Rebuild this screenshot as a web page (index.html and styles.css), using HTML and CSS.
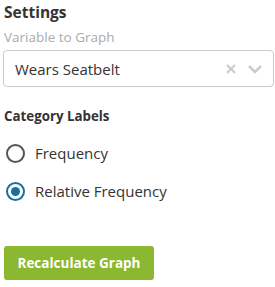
FILE: index.html
```html
<!DOCTYPE html>
<html lang="en">
<head>
    <meta charset="UTF-8">
    <title>Settings</title>
    <link rel="stylesheet" href="styles.css">
</head>
<body>
    <div class="settings">
        <h3>Settings</h3>
        <div class="field-label">Variable to Graph</div>
        <div class="select-box">
            <span class="select-value">Wears Seatbelt</span>
            <span class="select-icons">
                <svg class="clear-icon" width="12" height="12" viewBox="0 0 12 12">
                    <path d="M2 2 L10 10 M10 2 L2 10" stroke="#ccc" stroke-width="2.2" fill="none"/>
                </svg>
                <svg class="chevron-icon" width="16" height="12" viewBox="0 0 16 12">
                    <path d="M2 3 L8 9 L14 3" stroke="#ccc" stroke-width="2.6" fill="none"/>
                </svg>
            </span>
        </div>

        <h4>Category Labels</h4>
        <label class="radio">
            <span class="radio-circle"></span>
            Frequency
        </label>
        <label class="radio checked">
            <span class="radio-circle"></span>
            Relative Frequency
        </label>

        <button class="btn-recalc">Recalculate Graph</button>
    </div>
</body>
</html>
```
FILE: styles.css
```css
body {
    margin: 0;
    padding: 0 4px;
    font-family: "Open Sans", sans-serif;
    color: #333;
    background: white;
}
.settings {
    display: flex;
    flex-direction: column;
    align-items: flex-start;
}
h3 {
    margin: 2px 0 0 0;
    font-size: 15.5px;
    font-weight: 700;
    line-height: 20px;
}
.field-label {
    margin-top: 5px;
    font-size: 13.5px;
    color: #aaa;
    line-height: 20px;
}
.select-box {
    margin-top: 3px;
    margin-left: -1px;
    box-sizing: border-box;
    width: 271px;
    height: 37px;
    border: 1px solid #ccc;
    border-radius: 4px;
    display: flex;
    align-items: center;
    justify-content: space-between;
    padding: 0 10px 0 11px;
}
.select-value {
    font-size: 15px;
}
.select-icons {
    display: flex;
    align-items: center;
    gap: 10px;
}
h4 {
    margin: 19px 0 0 0;
    font-size: 13.3px;
    font-weight: 700;
    line-height: 20px;
}
.radio {
    display: flex;
    align-items: center;
    font-size: 15px;
    line-height: 20px;
    margin-top: 17px;
}
.radio + .radio {
    margin-top: 18px;
}
.radio-circle {
    box-sizing: border-box;
    width: 19px;
    height: 19px;
    border: 2px solid #555;
    border-radius: 50%;
    margin: 0 10px 0 2px;
    position: relative;
}
.checked .radio-circle {
    border-color: #1a6ea0;
}
.checked .radio-circle::after {
    content: "";
    position: absolute;
    left: 3px;
    top: 3px;
    width: 9px;
    height: 9px;
    border-radius: 50%;
    background: #1a6ea0;
}
.btn-recalc {
    margin-top: 45px;
    background: #8cb831;
    color: white;
    border: none;
    border-radius: 3px;
    font-family: "Open Sans", sans-serif;
    font-weight: 700;
    font-size: 13.5px;
    width: 150px;
    height: 34px;
}
```
